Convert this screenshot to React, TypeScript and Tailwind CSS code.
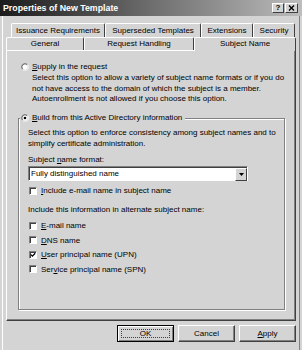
import React from 'react';

const topTabs = [
  { label: 'Issuance Requirements', cls: 'w-[94px]' },
  { label: 'Superseded Templates', cls: 'w-[96px]' },
  { label: 'Extensions', cls: 'w-[52px]' },
  { label: 'Security', cls: 'w-[42px]' },
];

const bottomTabs = [
  { label: 'General', cls: 'w-[78px]', selected: false },
  { label: 'Request Handling', cls: 'w-[110px]', selected: false },
  { label: 'Subject Name', cls: 'w-[102px]', selected: true },
];

function Radio({ checked }: { checked?: boolean }) {
  return (
    <svg width="8" height="8" viewBox="0 0 12 12" className="shrink-0">
      <circle cx="6" cy="6" r="5" fill="#fff" />
      <path d="M2.1 9.9 A5.5 5.5 0 0 1 9.9 2.1" fill="none" stroke="#808080" strokeWidth="1" />
      <path d="M9.9 2.1 A5.5 5.5 0 0 1 2.1 9.9" fill="none" stroke="#fff" strokeWidth="1" />
      <path d="M2.8 9.2 A4.5 4.5 0 0 1 9.2 2.8" fill="none" stroke="#404040" strokeWidth="1" />
      <path d="M9.2 2.8 A4.5 4.5 0 0 1 2.8 9.2" fill="none" stroke="#d4d4d4" strokeWidth="1" />
      {checked && <circle cx="6" cy="6" r="2" fill="#000" />}
    </svg>
  );
}

function Check({ checked }: { checked?: boolean }) {
  return (
    <div className="w-[8px] h-[8px] shrink-0 bg-white border border-t-[#808080] border-l-[#808080] border-b-white border-r-white shadow-[inset_1px_1px_0_#404040] flex items-center justify-center">
      {checked && (
        <svg width="6" height="6" viewBox="0 0 6 6">
          <path d="M1 2.6 L2.4 4.1 L5.2 1.2" fill="none" stroke="#000" strokeWidth="1.3" />
        </svg>
      )}
    </div>
  );
}

function CheckRow({ children, checked }: { children: React.ReactNode; checked?: boolean }) {
  return (
    <div className="h-[14.5px] flex items-center gap-[4px] pl-[1px]">
      <Check checked={checked} />
      <span className="leading-[11px]">{children}</span>
    </div>
  );
}

function DlgButton({ children, isDefault }: { children: React.ReactNode; isDefault?: boolean }) {
  return (
    <div
      className={
        isDefault
          ? 'w-[57px] h-[17px] border border-black shadow-[inset_1px_1px_0_#fff,inset_-1px_-1px_0_#808080] flex items-center justify-center p-[3px]'
          : 'w-[57px] h-[17px] border border-t-white border-l-white border-r-[#404040] border-b-[#404040] shadow-[inset_-1px_-1px_0_#808080] flex items-center justify-center'
      }
    >
      {isDefault ? (
        <span className="w-full h-full border border-dotted border-[#404040] flex items-center justify-center">{children}</span>
      ) : (
        children
      )}
    </div>
  );
}

export default function App() {
  return (
    <div className="w-[302px] h-[350px] bg-[#d4d4d4] overflow-hidden flex flex-col text-[8px] text-black font-['Liberation_Sans',Arial,sans-serif]">
      <div className="h-[16px] shrink-0 flex items-center justify-between pl-[3px] pr-[4px] bg-gradient-to-r from-[#1c1c1c] via-[#6e6e6e] to-[#bdbdbd]">
        <span className="text-white font-bold text-[8.8px] leading-none">Properties of New Template</span>
        <div className="flex gap-[1px]">
          <div className="w-[12px] h-[10px] bg-[#d4d4d4] border border-t-white border-l-white border-r-[#404040] border-b-[#404040] flex items-center justify-center font-bold text-[8px] leading-none">?</div>
          <div className="w-[13px] h-[10px] bg-[#d4d4d4] border border-t-white border-l-white border-r-[#404040] border-b-[#404040] flex items-center justify-center">
            <svg width="7" height="6" viewBox="0 0 7 6">
              <path d="M1 0.5 L6 5.5 M6 0.5 L1 5.5" stroke="#000" strokeWidth="1.4" />
            </svg>
          </div>
        </div>
      </div>

      <div className="flex-1 ml-[2px] mr-[2px] border-l border-l-white border-r border-r-[#808080]">
        {/* tabs */}
        <div className="flex ml-[8px] mt-[7px] h-[14px]">
          {topTabs.map(t => (
            <div key={t.label} className={`${t.cls} h-[14px] border-t border-l border-t-white border-l-white border-r border-r-[#404040] rounded-t-[2px] flex items-center justify-center leading-none`}>
              {t.label}
            </div>
          ))}
        </div>
        <div className="flex ml-[3px] h-[13px]">
          {bottomTabs.map(t => (
            <div
              key={t.label}
              className={
                t.selected
                  ? `${t.cls} h-[14px] z-10 bg-[#d4d4d4] border-t border-l border-t-white border-l-white border-r border-r-[#404040] rounded-t-[2px] flex items-center justify-center leading-none pb-[1px]`
                  : `${t.cls} h-[13px] border-t border-l border-t-white border-l-white border-r border-r-[#404040] rounded-t-[2px] flex items-center justify-center leading-none`
              }
            >
              {t.label}
            </div>
          ))}
        </div>

        {/* page */}
        <div className="ml-[3px] w-[290px] h-[271px] border border-t-white border-l-white border-r-[#404040] border-b-[#404040] shadow-[inset_-1px_-1px_0_#808080] pt-[10px]">
          <div className="h-[11px] flex items-center gap-[3px] pl-[14px]">
            <Radio />
            <span>
              <u>S</u>upply in the request
            </span>
          </div>
          <div className="pl-[25px] mt-[1px] leading-[10.5px]">
            Select this option to allow a variety of subject name formats or if you do
            <br />
            not have access to the domain of which the subject is a member.
            <br />
            Autoenrollment is not allowed if you choose this option.
          </div>

          <fieldset className="ml-[11px] mt-[8px] w-[267px] h-[197px] border border-[#808080] shadow-[inset_1px_1px_0_#fff,1px_1px_0_#fff]">
            <legend className="ml-[1px] px-[1px] bg-[#d4d4d4]">
              <span className="h-[11px] flex items-center gap-[3px] pr-[2px]">
                <Radio checked />
                <span>
                  <u>B</u>uild from this Active Directory information
                </span>
              </span>
            </legend>
            <div className="pl-[9px]">
              <div className="mt-[3px] leading-[11px]">
                Select this option to enforce consistency among subject names and to
                <br />
                simplify certificate administration.
              </div>
              <div className="mt-[5px] leading-[11px]">
                Subject <u>n</u>ame format:
              </div>
              <div className="mt-[1.5px] w-[220px] h-[15px] bg-white border border-t-[#808080] border-l-[#808080] border-b-white border-r-white shadow-[inset_1px_1px_0_#404040] flex items-center justify-between pl-[2px] pt-[1px]">
                <span className="leading-none">Fully distinguished name</span>
                <div className="w-[12px] h-[13px] bg-[#d4d4d4] border border-t-white border-l-white border-r-[#404040] border-b-[#404040] flex items-center justify-center">
                  <svg width="5" height="3" viewBox="0 0 5 3">
                    <path d="M0 0 H5 L2.5 3 Z" fill="#000" />
                  </svg>
                </div>
              </div>
              <div className="mt-[4px] h-[11px] flex items-center gap-[4px] pl-[1px]">
                <Check />
                <span>
                  <u>I</u>nclude e-mail name in subject name
                </span>
              </div>
              <div className="mt-[8px] leading-[11px]">Include this information in alternate subject name:</div>
              <div className="mt-[3.25px]">
                <CheckRow>
                  <u>E</u>-mail name
                </CheckRow>
                <CheckRow>
                  <u>D</u>NS name
                </CheckRow>
                <CheckRow checked>
                  <u>U</u>ser principal name (UPN)
                </CheckRow>
                <CheckRow>
                  Ser<u>v</u>ice principal name (SPN)
                </CheckRow>
              </div>
            </div>
          </fieldset>
        </div>

        {/* buttons */}
        <div className="ml-[3px] w-[290px] mt-[4px] flex justify-end gap-[4px]">
          <DlgButton isDefault>OK</DlgButton>
          <DlgButton>Cancel</DlgButton>
          <DlgButton>
            <span>
              <u>A</u>pply
            </span>
          </DlgButton>
        </div>
      </div>
    </div>
  );
}
